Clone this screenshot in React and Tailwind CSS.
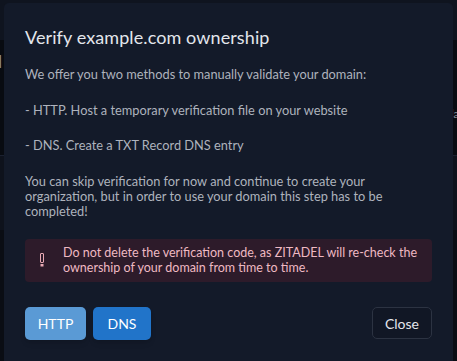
const font = { fontFamily: "Lato, 'Noto Sans', sans-serif" }

function AlertIcon() {
  return (
    <svg width="6" height="14" viewBox="0 0 6 14" className="shrink-0">
      <rect x="1.5" y="0.5" width="3" height="9" rx="0.5" fill="none" stroke="#e8a9b4" strokeWidth="1" />
      <rect x="1.5" y="11" width="3" height="2.5" fill="#e8a9b4" />
    </svg>
  )
}

function Backdrop() {
  return (
    <div className="absolute inset-0 bg-[#0b0f18]">
      <div className="h-[40px] bg-[#0f141f]" />
      <div className="h-[115px] bg-[#080b11] flex justify-between text-[#8a909c] text-[18px] pt-[8px]">
        <span className="-ml-[8px]">d</span>
        <span className="text-[11px] mt-[58px] -mr-[2px]">la</span>
      </div>
      <div className="h-[75px] bg-[#0e121c] border-t border-[#1b2130] pt-[28px] text-[#8a909c] text-[15px]">
        <span className="-ml-[12px]">el</span>
      </div>
      <div className="h-[131px] bg-[#0a0d14]" />
    </div>
  )
}

export default function App() {
  return (
    <div className="relative w-[457px] h-[361px] overflow-hidden" style={font}>
      <Backdrop />
      <div className="absolute left-[4px] top-[3px] w-[449px] h-[400px] bg-[#131a29] rounded-t-[5px] px-[21px] pt-[23px]">
        <h1 className="text-[18px] leading-[22px] text-[#e3e6ec] tracking-[0.1px]">Verify example.com ownership</h1>
        <div className="mt-[19px] text-[12.8px] leading-[15px] text-[#aeb3bd]">
          <p>We offer you two methods to manually validate your domain:</p>
          <p className="mt-[20.5px]">- HTTP. Host a temporary verification file on your website</p>
          <p className="mt-[20.5px]">- DNS. Create a TXT Record DNS entry</p>
          <p className="mt-[20.5px]">
            You can skip verification for now and continue to create your organization, but in order to use your domain this step has to be completed!
          </p>
        </div>
        <div className="mt-[20px] flex items-center gap-[18px] rounded-[4px] bg-[#2d1b2a] pl-[14px] pr-[10px] h-[43px] text-[12.5px] leading-[15px] text-[#efb9c3]">
          <AlertIcon />
          <p>Do not delete the verification code, as ZITADEL will re-check the ownership of your domain from time to time.</p>
        </div>
        <div className="mt-[25px] flex items-center">
          <button className="h-[33px] w-[61px] rounded-[5px] bg-[#5a9ad5] text-white text-[14px] shadow-md">HTTP</button>
          <button className="ml-[7px] h-[33px] w-[58px] rounded-[5px] bg-[#2174c9] text-white text-[14px] shadow-md">DNS</button>
          <button className="ml-auto h-[32px] w-[60px] rounded-[5px] border border-[#2c3342] bg-[#111725] text-[#e3e6ec] text-[14px]">Close</button>
        </div>
      </div>
    </div>
  )
}
